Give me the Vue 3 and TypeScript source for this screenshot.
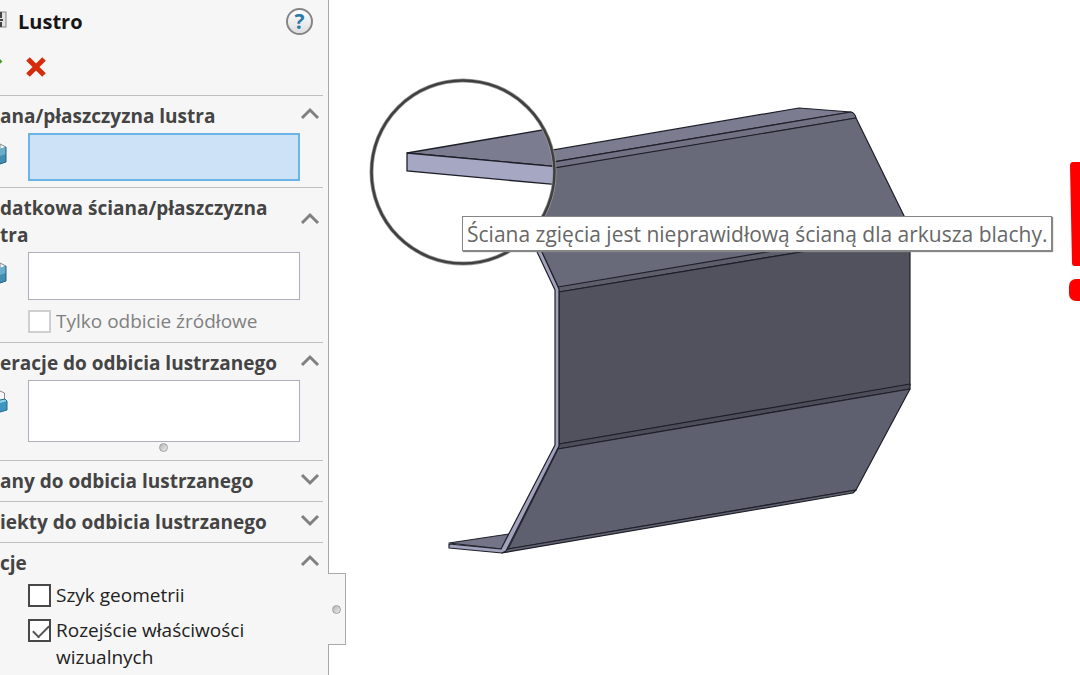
<script setup lang="ts">
import { reactive } from 'vue'

interface Option { label: string; checked: boolean; disabled?: boolean }
interface Section {
  id: string
  title: string
  open: boolean
  box?: 'active' | 'plain' | 'tall'
  icon?: 'plane' | 'feature'
  splitter?: boolean
  options?: Option[]
}

const sections = reactive<Section[]>([
  { id: 'plane', title: 'ana/płaszczyzna lustra', open: true, box: 'active', icon: 'plane' },
  {
    id: 'second', title: 'datkowa ściana/płaszczyzna tra', open: true, box: 'plain', icon: 'plane',
    options: [{ label: 'Tylko odbicie źródłowe', checked: false, disabled: true }],
  },
  { id: 'features', title: 'eracje do odbicia lustrzanego', open: true, box: 'tall', icon: 'feature', splitter: true },
  { id: 'faces', title: 'any do odbicia lustrzanego', open: false },
  { id: 'bodies', title: 'iekty do odbicia lustrzanego', open: false },
  {
    id: 'options', title: 'cje', open: true,
    options: [
      { label: 'Szyk geometrii', checked: false },
      { label: 'Rozejście właściwości wizualnych', checked: true },
    ],
  },
])
</script>

<template>
  <div class="app">
    <aside class="panel">
      <header class="titlebar">
        <svg class="title-icon" width="8" height="18" viewBox="0 0 8 18" aria-hidden="true">
          <rect x="-8" y="1" width="14" height="15" fill="#e4e4e6" stroke="#858585" />
          <path d="M1 1v6M0 9h3M1 11v5" stroke="#444" stroke-width="2" fill="none" />
        </svg>
        <h1>Lustro</h1>
        <button class="help" type="button" aria-label="Pomoc">?</button>
      </header>
      <div class="actions">
        <button type="button" class="ok" aria-label="OK">
          <svg width="4" height="20" viewBox="0 0 4 20"><path d="M-10 14L1 3" stroke="#3f9a22" stroke-width="4" /></svg>
        </button>
        <button type="button" class="cancel" aria-label="Anuluj">
          <svg width="20" height="20" viewBox="0 0 20 20">
            <path d="M2 2L18 18M18 2L2 18" stroke="#d62c0c" stroke-width="5" />
          </svg>
        </button>
      </div>

      <section v-for="s in sections" :key="s.id" class="section">
        <div class="head">
          <h2 :id="s.id">{{ s.title }}</h2>
          <button type="button" class="chevron" :aria-expanded="s.open" :aria-labelledby="s.id">
            <svg width="20" height="14" viewBox="0 0 20 14">
              <path :d="s.open ? 'M2 11L10 3L18 11' : 'M2 3L10 11L18 3'" fill="none" stroke="#808080" stroke-width="3" />
            </svg>
          </button>
        </div>
        <div v-if="s.box" class="pick">
          <svg v-if="s.icon === 'plane'" class="pick-icon" width="8" height="26" viewBox="0 0 8 26" aria-hidden="true">
            <path d="M0 4L6 7L0 10Z" fill="#eef6fa" stroke="#7f8c94" />
            <path d="M0 9L6 7V22L0 24Z" fill="#438db0" />
            <path d="M0 9L6 7V14L0 16Z" fill="#69adca" />
            <path d="M6 7V22L0 24" fill="none" stroke="#245f7f" />
          </svg>
          <svg v-else class="pick-icon feature" width="8" height="26" viewBox="0 0 8 26" aria-hidden="true">
            <path d="M0 2L4.500 4V11" fill="#fff" stroke="#888" />
            <path d="M0 11L5 10L7 12L0 15Z" fill="#8bd2ec" />
            <path d="M0 14L7 12V21L0 23Z" fill="#3c96be" />
            <path d="M0 11L5 10L7 12V21L0 23" fill="none" stroke="#25698b" />
          </svg>
          <div class="box" :class="s.box" role="listbox" tabindex="0" :aria-labelledby="s.id"></div>
        </div>
        <div v-if="s.splitter" class="splitter"><span class="dot"></span></div>
        <div v-if="s.options" class="options" :class="{ bare: !s.box }">
          <label v-for="o in s.options" :key="o.label" class="option" :class="{ disabled: o.disabled }">
            <input v-model="o.checked" type="checkbox" :disabled="o.disabled" />
            <span>{{ o.label }}</span>
          </label>
        </div>
      </section>
      <button type="button" class="tab" aria-label="Zwiń panel"><span class="dot"></span></button>
    </aside>

    <main class="stage">
      <svg class="scene" viewBox="329 0 751 675" preserveAspectRatio="xMinYMin meet" aria-hidden="true">
        <defs>
          <clipPath id="lens"><circle cx="463" cy="172" r="91" /></clipPath>
        </defs>
        <g stroke="#1f1f29" stroke-width="1.200" stroke-linejoin="round">
          <path d="M500 159L799 108L851 112L500 171Z" fill="#7b7c90" />
          <path d="M500 171L851 112Q855 113 856 118L500 178Z" fill="#707182" />
          <path d="M506 176L856 118L910 228V234L560 291Z" fill="#686979" />
          <path d="M558 287L910 228V234L559 292Z" fill="#5d5e6c" />
          <path d="M559 292L910 234V385L559 444Z" fill="#51525d" />
          <path d="M559 444L910 384V389L558 449Z" fill="#4c4d58" />
          <path d="M558 449L910 389L856 490L508 549Z" fill="#5e606f" />
          <path d="M508 549L856 490L853 493L502 553Z" fill="#626371" />
          <path d="M449 543L509 534L502 549Z" fill="#737487" />
          <path d="M523 222L555 290V445L501 549L449 544V548L502 553L506 551L559 446V289L528 222Z" fill="#a1a3bc" />
        </g>
        <circle cx="463" cy="172" r="91" fill="#fff" />
        <g clip-path="url(#lens)" stroke="#1f1f29" stroke-width="1.300">
          <path d="M407 153L560 127V167Z" fill="#7b7c90" />
          <path d="M407 153L560 167V185L407 171Z" fill="#a5a7c3" />
        </g>
        <circle cx="463" cy="172" r="91.500" fill="none" stroke="#999" stroke-width="4" />
        <circle cx="463" cy="172" r="91.500" fill="none" stroke="#3f3f3f" stroke-width="2.500" />
        <g fill="#fe0000">
          <path d="M1073 162H1092V266H1075Q1072 266 1072 263L1070 166Q1070 162 1073 162Z" />
          <rect x="1069" y="279" width="24" height="22" rx="7" />
        </g>
      </svg>
      <div class="tooltip" role="tooltip">Ściana zgięcia jest nieprawidłową ścianą dla arkusza blachy.</div>
    </main>
  </div>
</template>

<style>
body { margin: 0; background: #fff; }
</style>

<style scoped>
* { box-sizing: border-box; }
.app {
  display: flex;
  min-height: 100vh;
  overflow: hidden;
  font-family: "Open Sans", "Noto Sans", sans-serif;
}
button { padding: 0; border: 0; background: none; font-family: inherit; }
svg { display: block; }
.panel {
  position: relative;
  flex: none;
  width: 329px;
  background: #f6f6f6;
  border-right: 1px solid #a9a9ab;
}
.titlebar { display: flex; align-items: center; height: 42px; padding-right: 15px; }
.title-icon { margin-bottom: 2px; }
h1 { flex: 1; margin: 0 0 0 10px; padding-top: 2px; font-size: 20px; line-height: 28px; color: #161616; }
.help {
  width: 27px;
  height: 27px;
  border: 2px solid #858585;
  border-radius: 50%;
  background: linear-gradient(#fff, #dedee2);
  color: #2c7ba5;
  font-size: 21px;
  font-weight: 700;
  line-height: 22px;
}
.actions { display: flex; align-items: center; gap: 22px; height: 53px; padding-bottom: 3px; }
.section { margin-right: 5px; padding-top: 7px; padding-bottom: 6px; border-top: 1px solid #bfbfbf; }
.head { display: flex; align-items: center; justify-content: space-between; padding-right: 3px; }
h2 { margin: 0; max-width: 280px; font-size: 19px; line-height: 27px; color: #444; }
.chevron { margin-bottom: 6px; }
.pick { display: flex; margin-top: 3px; }
.pick-icon { margin: 7px 20px 0 0; }
.pick-icon.feature { margin-top: 9px; }
.box { flex: 1; height: 48px; margin-right: 23px; border: 1px solid #aeb0bb; background: #fff; outline: none; }
.box.active { border: 2px solid #6bb5e6; background: #cde2f7; }
.box.tall { height: 62px; }
.splitter { display: flex; justify-content: center; height: 12px; padding: 1px 0 0 4px; }
.dot {
  display: block;
  width: 9px;
  height: 9px;
  border: 1px solid #a0a0a0;
  border-radius: 50%;
  background: linear-gradient(135deg, #b4b4b4, #ececec);
}
.options { display: flex; flex-direction: column; gap: 8px; padding: 8px 24px 1px 28px; }
.options.bare { padding-top: 5px; }
.option { display: flex; align-items: flex-start; gap: 5px; font-size: 19px; line-height: 27px; color: #222; }
.option.disabled { color: #808080; }
.option span { max-width: 210px; }
input {
  appearance: none;
  flex: none;
  width: 23px;
  height: 23px;
  margin: 2px 0 0;
  border: 2px solid #484848;
  background: #fff;
}
.disabled input { border-color: #cfcfcf; }
input:checked::after {
  content: "";
  display: block;
  width: 14px;
  height: 7px;
  margin: 4px 0 0 3px;
  border-left: 2px solid #555;
  border-bottom: 2px solid #555;
  transform: rotate(-45deg);
}
.tab {
  position: absolute;
  top: 573px;
  left: 100%;
  z-index: 1;
  display: flex;
  align-items: center;
  justify-content: center;
  width: 18px;
  height: 72px;
  border: 1px solid #a9a9ab;
  border-left: 0;
  background: #f6f6f6;
}
.stage { position: relative; flex: 1; min-width: 0; background: #fff; }
.scene { width: 100%; }
.tooltip {
  position: absolute;
  top: 216px;
  left: 133px;
  padding: 1px 4px 0;
  border: 1px solid #858585;
  background: #fff;
  box-shadow: 1px 1px 1px #888;
  color: #676767;
  font-size: 21px;
  line-height: 32px;
  white-space: nowrap;
}
</style>
